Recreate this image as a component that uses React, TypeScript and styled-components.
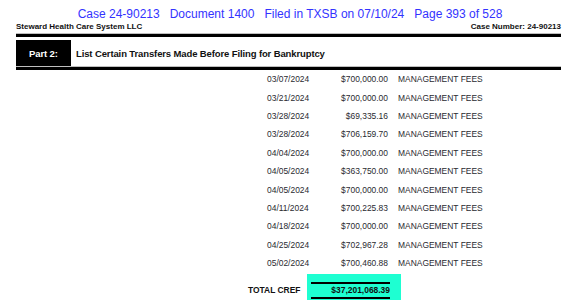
import React from 'react';
import styled, { createGlobalStyle } from 'styled-components';

const GlobalStyle = createGlobalStyle`
  html, body {
    margin: 0;
    padding: 0;
    background: #fff;
  }
  body {
    font-family: "Liberation Sans", Arial, sans-serif;
  }
`

const Page = styled.div`
  width: 580px;
  height: 300px;
  overflow: hidden;
  box-sizing: border-box;
  padding: 6px 19px 0 16px;
  background: #fff;
`
const Stamp = styled.div`
  height: 16px;
  line-height: 16px;
  font-size: 12px;
  color: #3333ff;
  text-align: center;
  white-space: pre;
  padding-left: 3px;
`
const MetaRow = styled.div`
  display: flex;
  justify-content: space-between;
  height: 10px;
  line-height: 10px;
  font-size: 8px;
  font-weight: bold;
  letter-spacing: 0;
  color: #111;
`
const Rule = styled.div<{ $gap: number }>`
  margin-top: ${p => p.$gap}px;
  height: 3px;
  background: #000;
  box-shadow: 0 -1px 0 rgba(0,0,0,0.25);
`
const PartHeader = styled.div`
  display: flex;
  align-items: center;
  margin-top: 3px;
  height: 26px;
  font-size: 9.5px;
  font-weight: bold;
  letter-spacing: -0.12px;
  > .tag{
    background: #000;
    color: #fff;
    width: 55px;
    height: 100%;
    box-sizing: border-box;
    padding-left: 13px;
    display: flex;
    align-items: center;
  }
  > .title{
    margin-left: 5px;
    color: #111;
  }
`
const Rows = styled.div`
  padding-left: 251px;
`
const Row = styled.div`
  display: grid;
  grid-template-columns: 42px 79px 1fr;
  height: 18.4px;
  align-items: center;
  font-size: 8.45px;
  color: #2a2a30;
  > .amount{
    text-align: right;
  }
  > .desc{
    padding-left: 10px;
  }
`
const TotalRow = styled.div`
  display: flex;
  align-items: flex-start;
  margin-top: 1.6px;
  padding-left: 232px;
  font-size: 8.45px;
  font-weight: bold;
  color: #111;
  > .label{
    width: 59px;
    padding-top: 10px;
    line-height: 13px;
  }
`
const TotalBox = styled.div`
  background: #1effd2;
  width: 94px;
  box-sizing: border-box;
  padding: 8px 11px 8px 4px;
  > .sum{
    border-top: 2px solid #000;
    border-bottom: 2px solid #000;
    line-height: 13px;
    text-align: right;
  }
`

const transfers = [
  ['03/07/2024', '$700,000.00'],
  ['03/21/2024', '$700,000.00'],
  ['03/28/2024', '$69,335.16'],
  ['03/28/2024', '$706,159.70'],
  ['04/04/2024', '$700,000.00'],
  ['04/05/2024', '$363,750.00'],
  ['04/05/2024', '$700,000.00'],
  ['04/11/2024', '$700,225.83'],
  ['04/18/2024', '$700,000.00'],
  ['04/25/2024', '$702,967.28'],
  ['05/02/2024', '$700,460.88'],
]

const App = () => {
  return (
    <Page>
      <GlobalStyle/>
      <Stamp>{'Case 24-90213   Document 1400   Filed in TXSB on 07/10/24   Page 393 of 528'}</Stamp>
      <MetaRow>
        <span>Steward Health Care System LLC</span>
        <span>Case Number: 24-90213</span>
      </MetaRow>
      <Rule $gap={2}/>
      <PartHeader>
        <div className="tag">Part 2:</div>
        <div className="title">List Certain Transfers Made Before Filing for Bankruptcy</div>
      </PartHeader>
      <Rule $gap={1}/>
      <Rows>
        {transfers.map(([date, amount], i) => (
          <Row key={i}>
            <span>{date}</span>
            <span className="amount">{amount}</span>
            <span className="desc">MANAGEMENT FEES</span>
          </Row>
        ))}
      </Rows>
      <TotalRow>
        <div className="label">TOTAL CREF</div>
        <TotalBox>
          <div className="sum">$37,201,068.39</div>
        </TotalBox>
      </TotalRow>
    </Page>
  )
};
export default App
